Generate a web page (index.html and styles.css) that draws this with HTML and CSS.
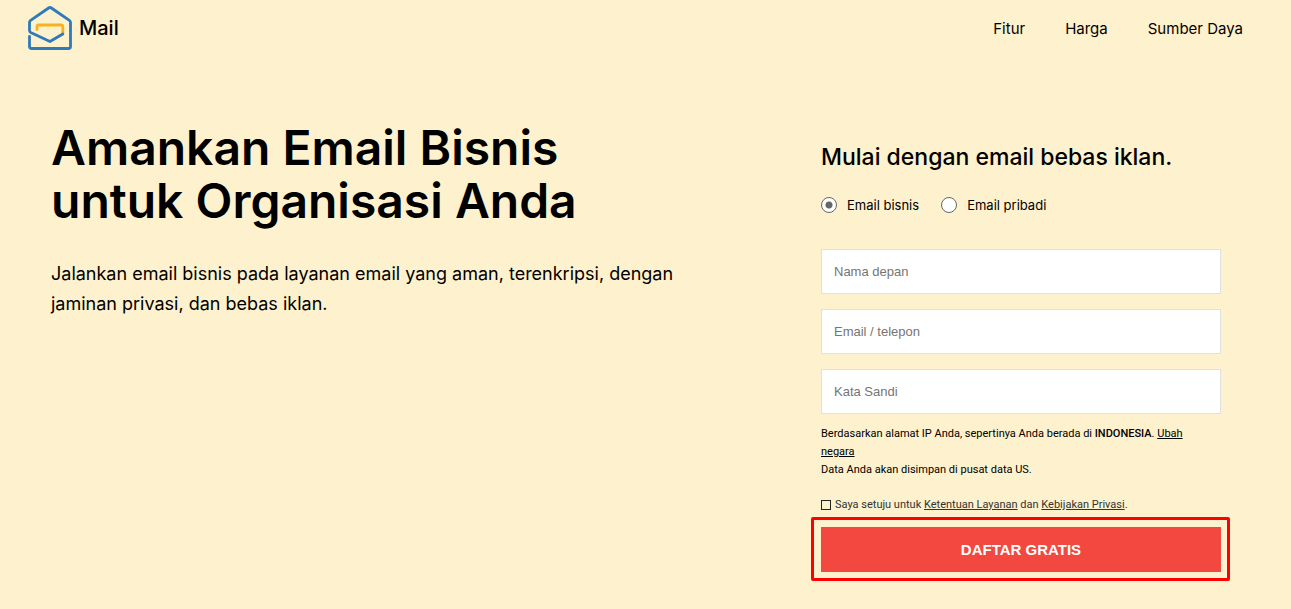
FILE: index.html
```html
<!DOCTYPE html>
<html lang="id">
<head>
<meta charset="utf-8">
<meta name="viewport" content="width=device-width, initial-scale=1">
<title>Mail</title>
<link rel="stylesheet" href="styles.css">
</head>
<body>
<header class="header">
  <a class="brand" href="#">
    <svg class="brand-icon" viewBox="0 0 44 44" fill="none" stroke-width="2.8" stroke-linecap="round" stroke-linejoin="round" aria-hidden="true">
      <path stroke="#f9b21d" d="M9 23.500v-3q0-1.500 1.500-1.500h22.500q1.800 0 1.800 1.800v7"/>
      <path stroke="#2e7aba" d="M34.800 28 22 35.500 2.700 26.500q-1.200-.6-1.200-1.900v-8.100q0-1.400 1.100-2.200L20.600 2q1.400-1 2.800 0l18 12.300q1.100.8 1.100 2.200v24q0 2-2 2H3.500q-2 0-2-2v-10"/>
    </svg>
    <span>Mail</span>
  </a>
  <nav class="nav">
    <a href="#">Fitur</a>
    <a href="#">Harga</a>
    <a href="#">Sumber Daya</a>
  </nav>
</header>
<main class="main">
  <section class="hero">
    <h1>Amankan Email Bisnis<br>untuk Organisasi Anda</h1>
    <p>Jalankan email bisnis pada layanan email yang aman, terenkripsi, dengan jaminan privasi, dan bebas iklan.</p>
  </section>
  <form class="signup">
    <h2>Mulai dengan email bebas iklan.</h2>
    <div class="choices">
      <label><input type="radio" name="type" checked>Email bisnis</label>
      <label><input type="radio" name="type">Email pribadi</label>
    </div>
    <div class="fields">
      <input type="text" placeholder="Nama depan" aria-label="Nama depan">
      <input type="text" placeholder="Email / telepon" aria-label="Email / telepon">
      <input type="password" placeholder="Kata Sandi" aria-label="Kata Sandi">
    </div>
    <p class="location">Berdasarkan alamat IP Anda, sepertinya Anda berada di <strong>INDONESIA</strong>. <a href="#">Ubah negara</a><br>Data Anda akan disimpan di pusat data US.</p>
    <div class="terms">
      <input type="checkbox" id="agree">
      <label for="agree">Saya setuju untuk <a href="#">Ketentuan Layanan</a> dan <a href="#">Kebijakan Privasi</a>.</label>
    </div>
    <div class="submit-frame"><button type="submit">DAFTAR GRATIS</button></div>
  </form>
</main>
</body>
</html>
```

FILE: styles.css
```css
* { box-sizing: border-box; }

body {
  margin: 0;
  background: #fef1cd;
  color: #000;
  font-family: Inter, "Liberation Sans", sans-serif;
}

a { color: inherit; }
h1, h2, p { margin: 0; }

.header {
  display: flex;
  justify-content: space-between;
  align-items: center;
  height: 56px;
  padding: 0 48px 0 28px;
}

.brand {
  display: flex;
  align-items: center;
  gap: 7px;
  font-size: 20px;
  font-weight: 500;
  text-decoration: none;
}

.brand-icon { width: 44px; height: 44px; }

.nav {
  display: flex;
  gap: 40px;
  font-size: 15px;
}

.nav a { text-decoration: none; }

.main {
  display: flex;
  justify-content: space-between;
  align-items: flex-start;
  gap: 60px;
  padding: 65px 70px 28px 51px;
}

.hero { flex: 0 1 650px; }

.hero h1 {
  font-size: 48px;
  font-weight: 600;
  line-height: 53px;
}

.hero p {
  margin-top: 32px;
  font-size: 18px;
  line-height: 30px;
}

.signup {
  flex: 0 0 400px;
  padding-top: 20px;
}

.signup h2 {
  font-size: 23px;
  font-weight: 500;
  line-height: 32px;
}

.choices {
  display: flex;
  gap: 22px;
  margin-top: 22px;
  font-size: 13px;
  line-height: 20px;
}

.choices label {
  display: flex;
  align-items: center;
  gap: 10px;
}

.choices input {
  appearance: none;
  width: 16px;
  height: 16px;
  margin: 0;
  border: 1px solid #666;
  border-radius: 50%;
  background: #fff;
}

.choices input:checked {
  background: radial-gradient(circle, #666 3px, #fff 4px);
}

.fields {
  display: grid;
  gap: 15px;
  margin-top: 34px;
}

.fields input {
  width: 100%;
  height: 45px;
  padding: 0 12px;
  border: 1px solid #e0e0e0;
  border-radius: 0;
  background: #fff;
  font: 13px "Liberation Sans", Arial, sans-serif;
}

.fields input::placeholder { color: #757575; }

.location {
  margin-top: 11px;
  padding-right: 12px;
  font-family: Roboto, "Liberation Sans", sans-serif;
  font-size: 11px;
  line-height: 18px;
}

.location strong { font-weight: 500; }

.terms {
  display: flex;
  align-items: center;
  gap: 4px;
  margin-top: 17px;
  color: #333;
  font-family: Roboto, "Liberation Sans", sans-serif;
  font-size: 11px;
  line-height: 18px;
}

.terms input {
  appearance: none;
  width: 10px;
  height: 10px;
  margin: 0;
  border: 1px solid #222;
}

.submit-frame {
  margin: 3px -9px -9px -10px;
  padding: 7px 6px 6px 7px;
  border: 3px solid #f00;
  border-radius: 2px;
}

.submit-frame button {
  display: block;
  width: 100%;
  height: 45px;
  border: 0;
  background: #f2483f;
  color: #fff;
  font: 700 15px "Liberation Sans", Arial, sans-serif;
}
```
